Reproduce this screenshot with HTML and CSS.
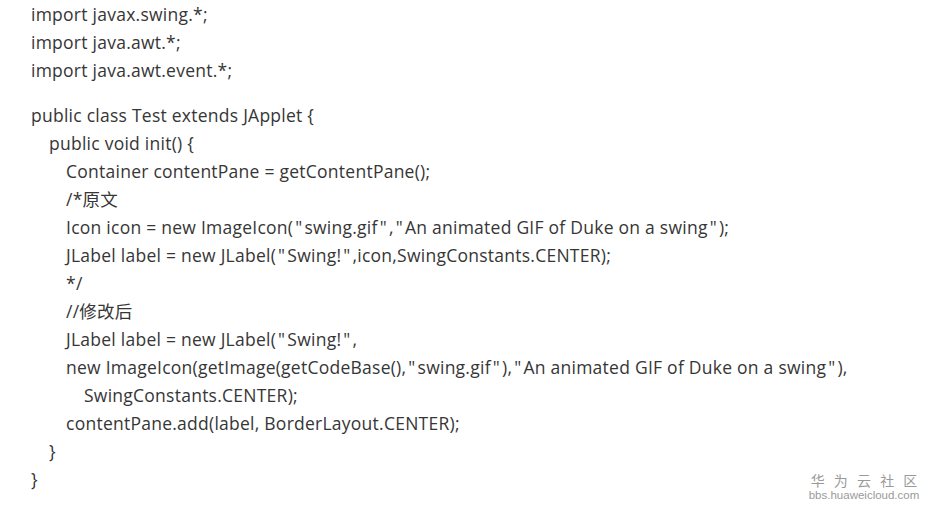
FILE: index.html
```html
<!DOCTYPE html>
<html>
<head>
<meta charset="utf-8">
<link rel="stylesheet" href="styles.css">
</head>
<body>
<div class="code">
  <div class="block">
    <div class="ln">import javax.swing.*;</div>
    <div class="ln">import java.awt.*;</div>
    <div class="ln">import java.awt.event.*;</div>
  </div>
  <div class="block">
    <div class="ln">public class Test extends JApplet {</div>
    <div class="ln i1">public void init() {</div>
    <div class="ln i2">Container contentPane = getContentPane();</div>
    <div class="ln i2">/*原文</div>
    <div class="ln i2">Icon icon = new ImageIcon(<span class="q">"</span>swing.gif<span class="q">"</span>,<span class="q">"</span>An animated GIF of Duke on a swing<span class="q">"</span>);</div>
    <div class="ln i2">JLabel label = new JLabel(<span class="q">"</span>Swing!<span class="q">"</span>,icon,SwingConstants.CENTER);</div>
    <div class="ln i2">*/</div>
    <div class="ln i2">//修改后</div>
    <div class="ln i2">JLabel label = new JLabel(<span class="q">"</span>Swing!<span class="q">"</span>,</div>
    <div class="ln i2">new ImageIcon(getImage(getCodeBase(),<span class="q">"</span>swing.gif<span class="q">"</span>),<span class="q">"</span>An animated GIF of Duke on a swing<span class="q">"</span>),</div>
    <div class="ln i3">SwingConstants.CENTER);</div>
    <div class="ln i2">contentPane.add(label, BorderLayout.CENTER);</div>
    <div class="ln i1">}</div>
    <div class="ln">}</div>
  </div>
</div>
<div class="mark">
  <div class="mark-cn">华 为 云 社 区</div>
  <div class="mark-en">bbs.huaweicloud.com</div>
</div>
</body>
</html>
```
FILE: styles.css
```css
html, body {
  margin: 0;
  padding: 0;
  background: #fff;
}
body {
  width: 932px;
  height: 511px;
  overflow: hidden;
  position: relative;
  font-family: "Open Sans", "Noto Sans CJK SC", sans-serif;
  color: #363636;
}
.code {
  padding: 0 0 0 31px;
  font-size: 17.5px;
  line-height: 28px;
  letter-spacing: 0.25px;
}
.block + .block {
  margin-top: 17px;
}
.ln {
  white-space: pre;
}
.q {
  padding: 0 2px;
}
.i1 { padding-left: 18px; }
.i2 { padding-left: 35px; }
.i3 { padding-left: 53px; }
.mark {
  position: absolute;
  left: 806px;
  top: 471px;
  width: 116px;
  text-align: center;
  color: #9a9a9a;
  font-family: "Noto Sans CJK SC", sans-serif;
  white-space: nowrap;
}
.mark-cn {
  font-size: 14px;
  line-height: 18px;
  letter-spacing: 3px;
  padding-left: 3px;
}
.mark-en {
  font-family: "Liberation Sans", sans-serif;
  font-size: 11.5px;
  line-height: 13px;
}
```
